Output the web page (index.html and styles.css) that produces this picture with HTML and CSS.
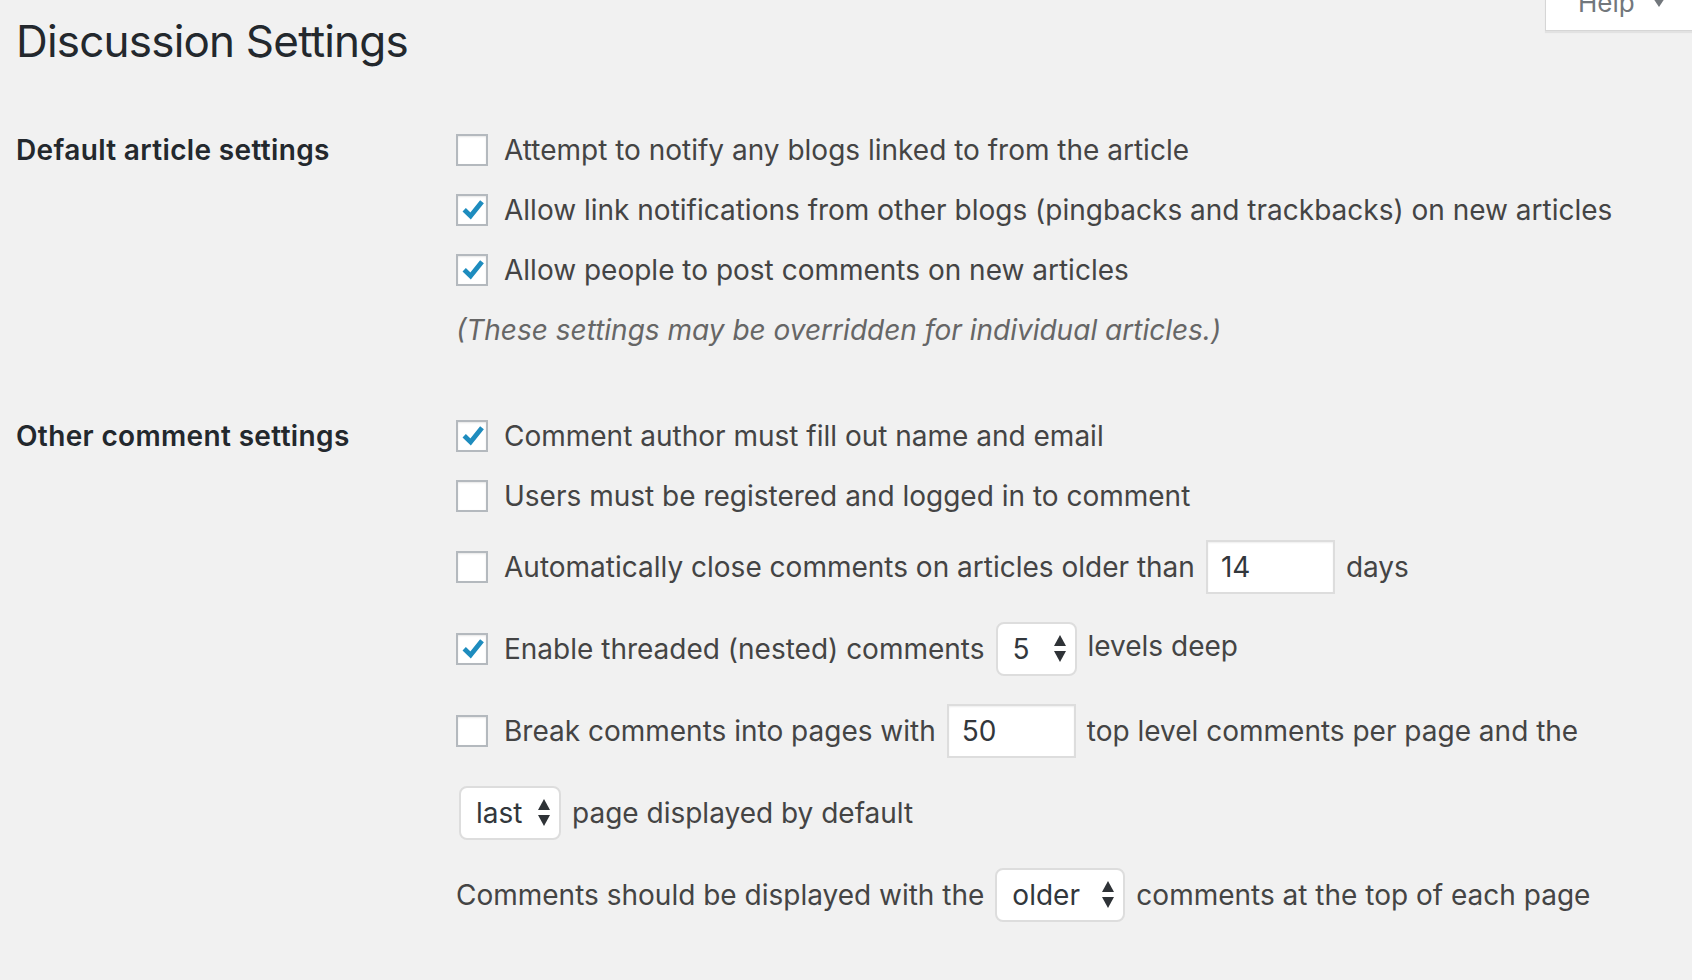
FILE: index.html
```html
<!DOCTYPE html>
<html lang="en">
<head>
<meta charset="utf-8">
<title>Discussion Settings</title>
<link rel="stylesheet" href="styles.css">
</head>
<body>
<div class="help-tab"><span class="help-text">Help</span><span class="caret"></span></div>
<div class="wrap">
  <h1 class="title">Discussion Settings</h1>
  <div class="form">
    <section class="group first">
      <div class="th">Default article settings</div>
      <div class="td">
        <div class="row"><span class="cb"></span><span>Attempt to notify any blogs linked to from the article</span></div>
        <div class="row"><span class="cb"><svg viewBox="0 0 28 28"><path d="M6.2 13.8 L12.6 20 L24 5.8" /></svg></span><span>Allow link notifications from other blogs (pingbacks and trackbacks) on new articles</span></div>
        <div class="row"><span class="cb"><svg viewBox="0 0 28 28"><path d="M6.2 13.8 L12.6 20 L24 5.8" /></svg></span><span>Allow people to post comments on new articles</span></div>
        <div class="row note">(These settings may be overridden for individual articles.)</div>
      </div>
    </section>
    <section class="group second">
      <div class="th">Other comment settings</div>
      <div class="td">
        <div class="row"><span class="cb"><svg viewBox="0 0 28 28"><path d="M6.2 13.8 L12.6 20 L24 5.8" /></svg></span><span>Comment author must fill out name and email</span></div>
        <div class="row"><span class="cb"></span><span>Users must be registered and logged in to comment</span></div>
        <div class="row tall"><span class="cb"></span><span>Automatically close comments on articles older than</span><span class="input w-num">14</span><span>days</span></div>
        <div class="row tall"><span class="cb"><svg viewBox="0 0 28 28"><path d="M6.2 13.8 L12.6 20 L24 5.8" /></svg></span><span>Enable threaded (nested) comments</span><span class="select w-5">5<i class="arrows"></i></span><span class="raise">levels deep</span></div>
        <div class="row tall"><span class="cb"></span><span>Break comments into pages with</span><span class="input w-num">50</span><span>top level comments per page and the</span></div>
        <div class="row tall"><span class="select w-last">last<i class="arrows"></i></span><span>page displayed by default</span></div>
        <div class="row tall"><span>Comments should be displayed with the</span><span class="select w-older">older<i class="arrows"></i></span><span>comments at the top of each page</span></div>
      </div>
    </section>
  </div>
</div>
</body>
</html>
```

FILE: styles.css
```css
html, body {
  margin: 0;
  padding: 0;
  background: #f1f1f1;
}
body {
  font-family: Inter, "Liberation Sans", sans-serif;
  color: #444;
  font-size: 28px;
  position: relative;
  min-height: 980px;
  overflow: hidden;
}
.help-tab {
  position: absolute;
  top: -22px;
  left: 1545px;
  width: 160px;
  height: 53px;
  background: #fff;
  border: 1px solid #d6d6d6;
  border-top: none;
  box-shadow: 0 2px 1px rgba(0,0,0,0.06);
  display: flex;
  align-items: flex-start;
  padding: 0 0 0 32px;
  box-sizing: border-box;
  color: #72777c;
  font-size: 26px;
  gap: 18px;
}
.help-text { line-height: 30px; margin-top: 10px; }
.caret {
  width: 0; height: 0;
  border-left: 6px solid transparent;
  border-right: 6px solid transparent;
  border-top: 9px solid #72777c;
  margin-top: 20px;
}
.wrap {
  padding: 0 0 0 16px;
}
.title {
  margin: 0;
  padding-top: 12px;
  height: 108px;
  font-size: 44px;
  line-height: 58px;
  font-weight: 400;
  color: #23282d;
  letter-spacing: -0.8px;
}
.group {
  display: grid;
  grid-template-columns: 440px 1fr;
}
.group.second { margin-top: 46px; }
.th {
  font-weight: 600;
  color: #23282d;
  line-height: 60px;
  letter-spacing: 0.35px;
}
.td { display: flex; flex-direction: column; }
.row {
  display: flex;
  align-items: center;
  height: 60px;
  gap: 11px;
  white-space: nowrap;
}
.row.tall { height: 82px; }
.cb {
  width: 32px;
  height: 32px;
  box-sizing: border-box;
  border: 2px solid #b4b9be;
  background: #fff;
  box-shadow: inset 0 1px 2px rgba(0,0,0,0.1);
  margin-right: 5px;
  flex: none;
  display: flex;
}
.cb svg { width: 28px; height: 28px; overflow: visible; }
.cb path {
  fill: none;
  stroke: #1e8cbe;
  stroke-width: 4.8;
  stroke-linecap: butt;
  stroke-linejoin: miter;
}
.note {
  font-style: italic;
  color: #666;
}
.input {
  height: 54px;
  box-sizing: border-box;
  border: 2px solid #ddd;
  background: #fff;
  box-shadow: inset 0 1px 2px rgba(0,0,0,0.07);
  padding: 0 13px;
  display: flex;
  align-items: center;
  color: #32373c;
}
.w-num { width: 129px; }
.select {
  height: 54px;
  box-sizing: border-box;
  border: 2px solid #ddd;
  border-radius: 8px;
  background: #fff;
  padding: 0 0 0 15px;
  display: flex;
  align-items: center;
  position: relative;
  color: #32373c;
}
.w-5 { width: 81px; }
.w-last { width: 102px; margin-left: 3px; }
.w-older { width: 130px; }
.arrows {
  position: absolute;
  right: 9px;
  top: 11px;
  width: 12px;
  height: 27px;
}
.arrows::before, .arrows::after {
  content: "";
  position: absolute;
  left: 0;
  border-left: 6px solid transparent;
  border-right: 6px solid transparent;
}
.arrows::before { top: 0; border-bottom: 11px solid #2f3337; }
.arrows::after { bottom: 0; border-top: 11px solid #2f3337; }
.raise { position: relative; top: -3px; }
```
